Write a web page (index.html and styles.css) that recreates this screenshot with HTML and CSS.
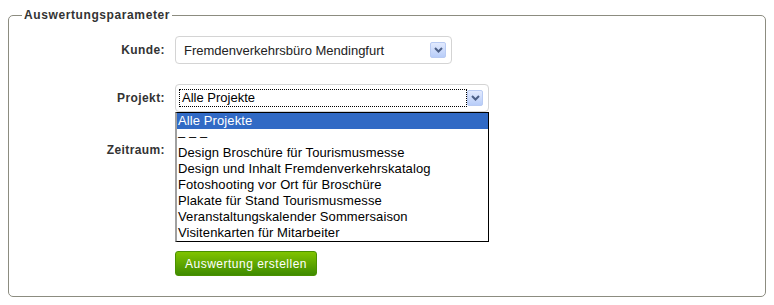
FILE: index.html
```html
<!DOCTYPE html>
<html lang="de">
<head>
    <meta charset="UTF-8">
    <title>Auswertung</title>
    <link rel="stylesheet" href="styles.css">
</head>
<body>
    <form class="report-form">
        <fieldset class="params">
            <legend>Auswertungsparameter</legend>
            <div class="form-grid">
                <label class="field-label">Kunde:</label>
                <div class="select-box customer-select">
                    <span class="select-value">Fremdenverkehrsbüro Mendingfurt</span>
                    <span class="select-arrow">
                        <svg width="9" height="6" viewBox="0 0 9 6"><path d="M1 1 L4.5 4.5 L8 1" fill="none" stroke="#4c5f86" stroke-width="2"/></svg>
                    </span>
                </div>

                <label class="field-label">Projekt:</label>
                <div class="select-holder">
                    <div class="select-box project-select">
                        <span class="select-value focused">Alle Projekte</span>
                        <span class="select-arrow">
                            <svg width="9" height="6" viewBox="0 0 9 6"><path d="M1 1 L4.5 4.5 L8 1" fill="none" stroke="#4c5f86" stroke-width="2"/></svg>
                        </span>
                    </div>
                    <ul class="dropdown-list">
                        <li class="selected">Alle Projekte</li>
                        <li>– – –</li>
                        <li>Design Broschüre für Tourismusmesse</li>
                        <li>Design und Inhalt Fremdenverkehrskatalog</li>
                        <li>Fotoshooting vor Ort für Broschüre</li>
                        <li>Plakate für Stand Tourismusmesse</li>
                        <li>Veranstaltungskalender Sommersaison</li>
                        <li>Visitenkarten für Mitarbeiter</li>
                    </ul>
                </div>

                <label class="field-label period-label">Zeitraum:</label>
                <div class="period-fields"></div>

                <span></span>
                <div class="actions">
                    <button type="button" class="submit-btn">Auswertung erstellen</button>
                </div>
            </div>
        </fieldset>
    </form>
</body>
</html>
```

FILE: styles.css
```css
* {
    box-sizing: border-box;
}
body {
    margin: 8px 8px 7px 8px;
    font-family: "Liberation Sans", Arial, sans-serif;
    font-size: 13px;
    color: #222;
    background-color: white;
}
.params {
    margin: 0;
    padding: 0 0 20px 0;
    border: 1px solid #8c8c80;
    border-radius: 5px;
}
.params legend {
    margin-left: 13px;
    padding: 0 2px;
    font-size: 12px;
    font-weight: bold;
    line-height: 14px;
    color: #333;
    letter-spacing: 0.6px;
}
.form-grid {
    display: grid;
    grid-template-columns: 156px 1fr;
    column-gap: 10px;
    row-gap: 20px;
    padding-top: 14px;
}
.field-label {
    font-size: 12px;
    font-weight: bold;
    color: #333;
    text-align: right;
    align-self: center;
    letter-spacing: 0.4px;
}
.period-label {
    align-self: start;
    padding-top: 11px;
}
.select-box {
    height: 28px;
    border: 1px solid #d4d4d4;
    border-radius: 4px;
    background-color: white;
    display: flex;
    align-items: center;
    justify-content: space-between;
    padding: 0 5px 0 8px;
}
.customer-select {
    width: 277px;
}
.project-select {
    width: 314px;
    padding-left: 4px;
}
.select-value {
    white-space: nowrap;
}
.select-value.focused {
    flex: 1;
    color: black;
    outline: 1px dotted #000;
    height: 16px;
    line-height: 15px;
    padding-left: 2px;
    margin-right: 1px;
}
.select-arrow {
    width: 16px;
    height: 16px;
    border: 1px solid #b9cbf3;
    border-radius: 2px;
    background: linear-gradient(to bottom, #e2eafe, #b8cdf9);
    display: flex;
    align-items: center;
    justify-content: center;
}
.select-holder {
    position: relative;
}
.dropdown-list {
    position: absolute;
    top: 28px;
    left: 0;
    width: 314px;
    margin: 0;
    padding: 0;
    list-style: none;
    background-color: white;
    border: 1px solid #000;
    border-left: 2px solid #a0a0a0;
    color: black;
    z-index: 2;
}
.dropdown-list li {
    height: 16px;
    line-height: 16px;
    padding-left: 1px;
    white-space: nowrap;
    letter-spacing: 0.1px;
}
.dropdown-list li.selected {
    background-color: #316ac5;
    color: white;
}
.period-fields {
    height: 99px;
}
.submit-btn {
    height: 25px;
    width: 142px;
    border: 1px solid #4a9000;
    border-radius: 3px;
    background: linear-gradient(to bottom, #80c400, #3f8b00);
    color: white;
    font-family: "Liberation Sans", Arial, sans-serif;
    font-size: 12px;
    letter-spacing: 0.5px;
    padding: 0;
    cursor: pointer;
}
```
